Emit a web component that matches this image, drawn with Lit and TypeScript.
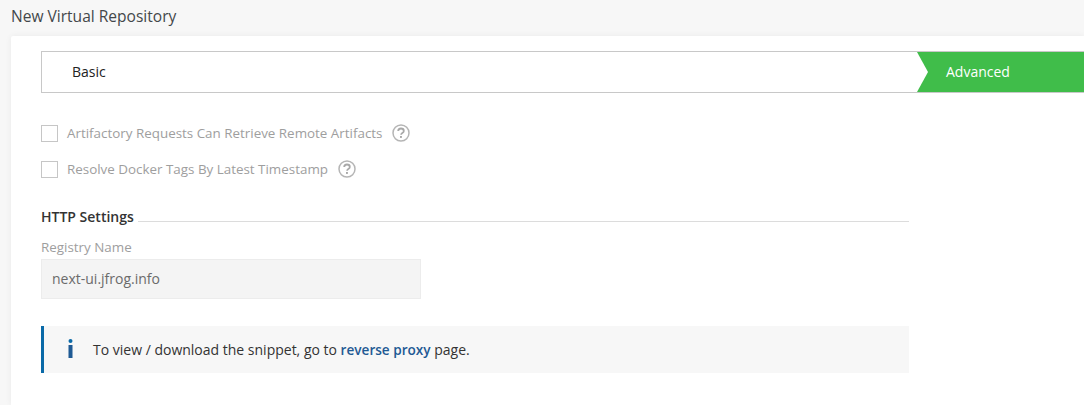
import { LitElement, html, css } from "lit";
import { customElement } from "lit/decorators.js";

const help = html`<svg class="help" width="18" height="18" viewBox="0 0 18 18" aria-hidden="true">
  <circle cx="9" cy="9" r="8" fill="none" stroke="#b5b5b5" stroke-width="1.5"></circle>
  <path d="M6.2 7.1c0-1.6 1.2-2.6 2.8-2.6s2.8.9 2.8 2.4c0 1-.5 1.5-1.5 2.1-.8.5-1.2.9-1.2 1.8" fill="none" stroke="#a8a8a8" stroke-width="1.8"></path>
  <rect x="8" y="12" width="1.9" height="1.9" fill="#a8a8a8"></rect>
</svg>`;

@customElement("app-root")
export class AppRoot extends LitElement {
  static styles = css`
    :host { display: block; width: 1084px; height: 405px; overflow: hidden; background: #f7f7f7; font-family: "Open Sans", sans-serif; font-size: 14px; color: #333; }
    .title { height: 36px; box-sizing: border-box; padding: 6px 0 0 11px; font-size: 15.55px; line-height: 20px; color: #43474a; }
    .card { margin-left: 11px; height: 369px; box-sizing: border-box; background: #fff; padding: 15px 0 0 30px; box-shadow: 0 0 6px rgba(0,0,0,.06); border-radius: 2px 0 0 0; }
    .wizard { display: flex; height: 42px; box-sizing: border-box; border: 1px solid #c8c8c8; border-right: 0; background: #fff; }
    .step { flex: 1; padding-left: 30px; line-height: 40px; color: #222; }
    .adv { position: relative; width: 167px; margin: 0; padding-left: 29px; box-sizing: border-box; line-height: 40px; background: #40bd4a; color: #fff; }
    .adv::before { content: ""; position: absolute; left: 0; top: 0; width: 11px; height: 40px; background: #fff; clip-path: polygon(0 0, 100% 50%, 0 100%); }
    .checks { display: flex; flex-direction: column; gap: 16px; margin-top: 30px; }
    .check { display: flex; align-items: center; height: 20px; font-size: 13.4px; color: #9e9e9e; }
    .box { width: 15px; height: 15px; border: 1px solid #c6c6c6; margin: 1px 9px 0 0; flex: none; }
    .help { margin-left: 10px; flex: none; }
    .section { display: flex; align-items: flex-end; width: 868px; margin-top: 28px; height: 20px; font-weight: 600; font-size: 14px; color: #333; }
    .section span { line-height: 20px; }
    .section i { flex: 1; height: 1px; background: #dcdcdc; margin: 0 0 5px 4px; }
    .label { margin-top: 10px; line-height: 20px; font-size: 13.4px; color: #9e9e9e; }
    .input { width: 380px; height: 40px; box-sizing: border-box; margin-top: 2px; padding-left: 10px; line-height: 38px; background: #f4f4f4; border: 1px solid #ececec; color: #6b6b6b; }
    .info { display: flex; align-items: center; width: 868px; height: 47px; box-sizing: border-box; margin-top: 27px; background: #f7f7f7; border-left: 3px solid #0a6aa8; color: #333; }
    .glyph { width: 49px; display: flex; justify-content: center; flex: none; box-sizing: border-box; padding: 0 0 2px 3px; }
    .rp { color: #1f5a94; font-weight: 600; font-size: 13.6px; }
  `;

  render() {
    return html`
      <div class="title">New Virtual Repository</div>
      <div class="card">
        <div class="wizard">
          <div class="step">Basic</div>
          <div class="adv">Advanced</div>
        </div>
        <div class="checks">
          <div class="check"><span class="box"></span>Artifactory Requests Can Retrieve Remote Artifacts${help}</div>
          <div class="check"><span class="box"></span>Resolve Docker Tags By Latest Timestamp${help}</div>
        </div>
        <div class="section"><span>HTTP Settings</span><i></i></div>
        <div class="label">Registry Name</div>
        <div class="input">next-ui.jfrog.info</div>
        <div class="info">
          <span class="glyph"><svg width="5" height="19" viewBox="0 0 5 19" aria-hidden="true"><circle cx="2.5" cy="2" r="2" fill="#0a6aa8"></circle><rect x="0.5" y="6" width="4" height="13" fill="#1f5a94"></rect></svg></span>
          <span>To view / download the snippet, go to <span class="rp">reverse proxy</span> page.</span>
        </div>
      </div>
    `;
  }
}
